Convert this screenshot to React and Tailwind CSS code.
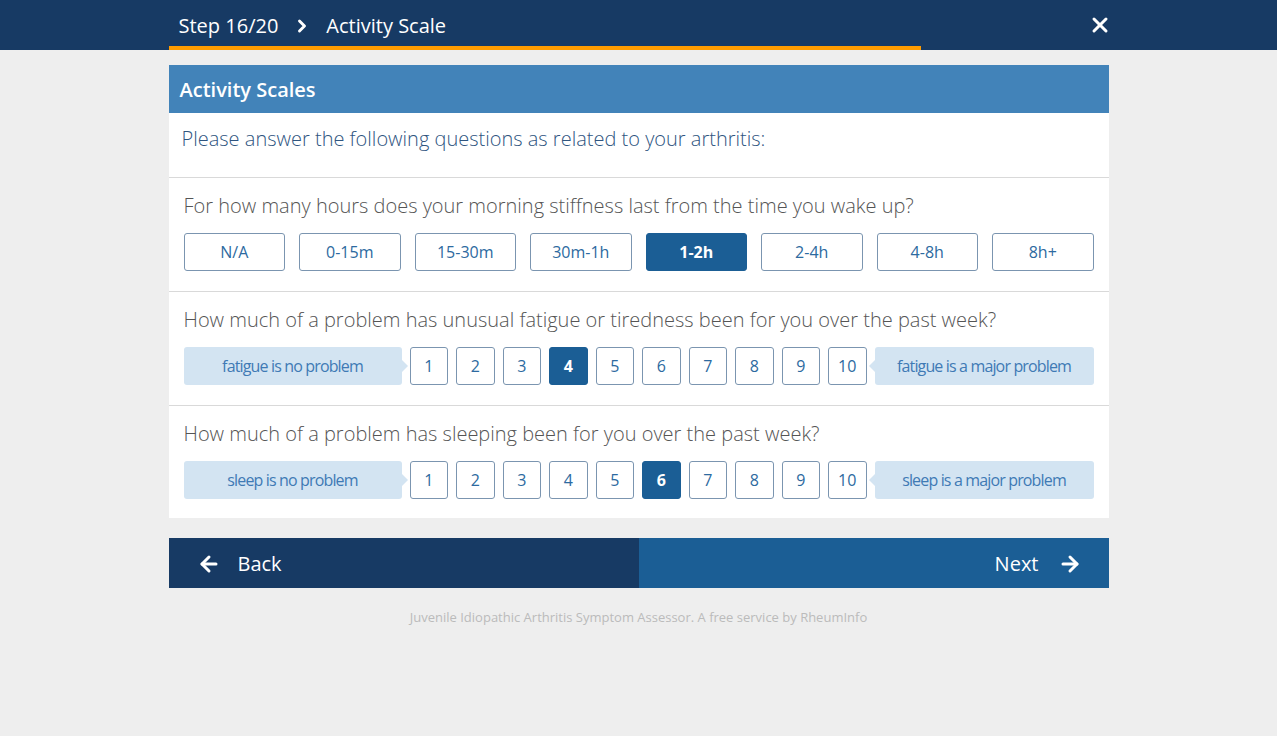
import { ArrowLeft, ArrowRight, ChevronRight, X } from 'lucide-react';

const durations = ['N/A', '0-15m', '15-30m', '30m-1h', '1-2h', '2-4h', '4-8h', '8h+'];
const scale = [1, 2, 3, 4, 5, 6, 7, 8, 9, 10];

const ScaleRow = ({ low, high, selected }) => (
    <div className="flex items-stretch gap-2 h-[38px]">
        <div className="relative w-[218px] shrink-0 bg-[#d3e4f2] rounded-[3px] flex items-center justify-center text-[16px] tracking-[-0.85px] text-[#3f7ab5]">
            {low}
            <span className="absolute -right-[6px] top-1/2 -translate-y-1/2 w-0 h-0 border-y-[6px] border-y-transparent border-l-[6px] border-l-[#d3e4f2]"></span>
        </div>
        {scale.map(n => (
            <div
                key={n}
                className={`flex-1 flex items-center justify-center rounded-[3px] border text-[16px]
                    ${n === selected ? 'bg-[#1b5e95] border-[#1b5e95] text-white font-bold' : 'bg-white border-[#7b95b0] text-[#2d6aa0]'}
                `}
            >
                {n}
            </div>
        ))}
        <div className="relative w-[219px] shrink-0 bg-[#d3e4f2] rounded-[3px] flex items-center justify-center text-[16px] tracking-[-0.85px] text-[#3f7ab5]">
            {high}
            <span className="absolute -left-[6px] top-1/2 -translate-y-1/2 w-0 h-0 border-y-[6px] border-y-transparent border-r-[6px] border-r-[#d3e4f2]"></span>
        </div>
    </div>
);

const Question = ({ title, children, last }) => (
    <div className={`px-[15px] pt-[14px] ${last ? 'pb-[19px]' : 'pb-[20px] border-b border-[#d9d9d9]'}`}>
        <p className="text-[20px] font-light text-[#555] leading-[28px] mb-[13px]">{title}</p>
        {children}
    </div>
);

export default function App() {
    return (
        <div className="min-h-[736px] bg-[#eeeeee]" style={{ fontFamily: '"Open Sans", sans-serif' }}>
            {/* Top bar */}
            <div className="bg-[#173a64] h-[50px]">
                <div className="w-[940px] mx-auto h-full relative flex items-center">
                    <div className="flex items-center text-white text-[20px] pl-[10px] pt-[2px]">
                        <span>Step 16/20</span>
                        <ChevronRight size={20} strokeWidth={3.5} className="mx-[14px]" />
                        <span>Activity Scale</span>
                    </div>
                    <X size={24} strokeWidth={3} className="text-white ml-auto mr-[-3px]" />
                    <div className="absolute left-0 bottom-0 h-[4px] w-[80%] bg-[#ff9c00]"></div>
                </div>
            </div>

            <div className="w-[940px] mx-auto pt-[15px]">
                <div className="bg-white">
                    <div className="bg-[#4283b9] h-[48px] flex items-center px-[11px] pt-[2px]">
                        <h2 className="text-white text-[20px] font-semibold">Activity Scales</h2>
                    </div>
                    <div className="px-[13px] h-[65px] pt-[11px] border-b border-[#d9d9d9]">
                        <p className="text-[20px] font-light text-[#2f557f]">Please answer the following questions as related to your arthritis:</p>
                    </div>

                    <Question title="For how many hours does your morning stiffness last from the time you wake up?">
                        <div className="grid grid-cols-8 gap-[14px]">
                            {durations.map(d => (
                                <div
                                    key={d}
                                    className={`h-[38px] flex items-center justify-center rounded-[3px] border text-[16px]
                                        ${d === '1-2h' ? 'bg-[#1b5e95] border-[#1b5e95] text-white font-bold' : 'bg-white border-[#7b95b0] text-[#2d6aa0]'}
                                    `}
                                >
                                    {d}
                                </div>
                            ))}
                        </div>
                    </Question>

                    <Question title="How much of a problem has unusual fatigue or tiredness been for you over the past week?">
                        <ScaleRow low="fatigue is no problem" high="fatigue is a major problem" selected={4} />
                    </Question>

                    <Question title="How much of a problem has sleeping been for you over the past week?" last>
                        <ScaleRow low="sleep is no problem" high="sleep is a major problem" selected={6} />
                    </Question>
                </div>

                {/* Nav buttons */}
                <div className="flex mt-[20px] h-[50px]">
                    <button className="flex-1 bg-[#173a64] text-white text-[20px] flex items-center pl-[28px] pt-[2px]">
                        <ArrowLeft size={24} strokeWidth={3} />
                        <span className="ml-[17px]">Back</span>
                    </button>
                    <button className="flex-1 bg-[#1b5e95] text-white text-[20px] flex items-center justify-end pr-[27px] pt-[2px]">
                        <span className="mr-[19px]">Next</span>
                        <ArrowRight size={24} strokeWidth={3} />
                    </button>
                </div>

                <p className="text-center text-[13px] text-[#bbbbbb] mt-[20px]">
                    Juvenile Idiopathic Arthritis Symptom Assessor. A free service by RheumInfo
                </p>
            </div>
        </div>
    );
}
